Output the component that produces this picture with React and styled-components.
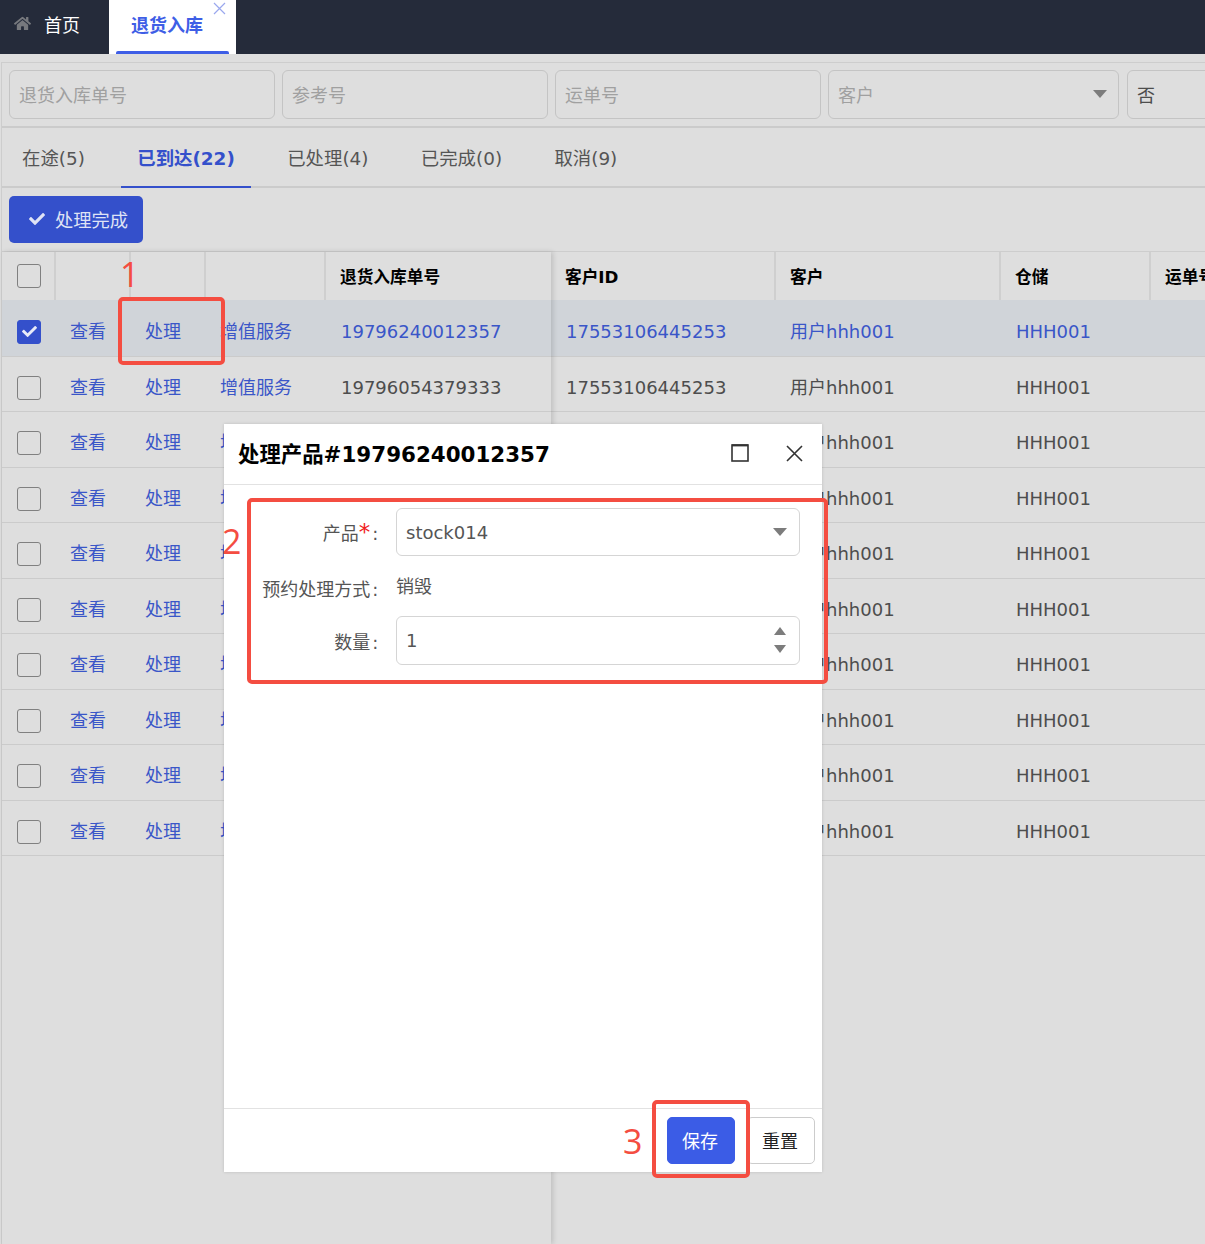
import React from "react";
import styled, { createGlobalStyle } from "styled-components";
import { FaHome, FaCheck } from "react-icons/fa";

const GlobalStyle = createGlobalStyle`
  html, body {
    margin: 0;
    padding: 0;
    background: #dedede;
    font-family: "DejaVu Sans", "Noto Sans CJK SC", sans-serif;
    font-size: 18px;
    color: #4d4d4d;
  }
  * { box-sizing: border-box; }
`;

const Page = styled.div`
  position: relative;
  width: 1205px;
  height: 1244px;
  overflow: hidden;
  background: #dedede;
`;

const TopBar = styled.div`
  height: 54px;
  background: #252b3a;
  display: flex;
`;

const HomeTab = styled.div`
  width: 109px;
  display: flex;
  align-items: center;
  gap: 13px;
  padding: 0 0 7px 14px;
  color: #fff;
  svg { color: #77797e; width: 17px; height: 17px; }
`;

const ActiveTab = styled.div`
  position: relative;
  width: 127px;
  background: #fff;
  color: #3e5ee6;
  font-weight: 700;
  padding: 13px 0 0 22px;
  line-height: 26px;
  &::after {
    content: "";
    position: absolute;
    left: 7px;
    right: 7px;
    bottom: 0;
    height: 3px;
    border-radius: 2px 2px 0 0;
    background: #3e5ee6;
  }
`;

const TabClose = styled.svg`
  position: absolute;
  top: 2px;
  right: 10px;
  width: 13px;
  height: 13px;
  stroke: #9aa8ee;
  stroke-width: 1.2;
`;

const Main = styled.div`
  margin: 8px 0 0 1px;
  border-left: 1px solid #cdcdcd;
  height: 1182px;
`;

const FilterBar = styled.div`
  height: 66px;
  border-top: 1px solid #cdcdcd;
  border-bottom: 2px solid #cbcbcb;
  padding: 7px 0 0 7px;
  display: flex;
  gap: 7px;
  overflow: hidden;
`;

const Field = styled.div`
  flex: 0 0 ${(p) => p.$w}px;
  height: 49px;
  border: 1px solid #c4c4c4;
  border-radius: 6px;
  padding: 0 9px 2px;
  display: flex;
  align-items: center;
  justify-content: space-between;
  color: ${(p) => (p.$value ? "#4d4d4d" : "#a0a0a0")};
  margin-left: ${(p) => p.$ml || 0}px;
`;

const Caret = styled.span`
  width: 0;
  height: 0;
  border-left: ${(p) => p.$s ?? 7}px solid transparent;
  border-right: ${(p) => p.$s ?? 7}px solid transparent;
  border-${(p) => (p.$up ? "bottom" : "top")}: 8px solid #7c7c7c;
  margin-right: ${(p) => p.$mr ?? 2}px;
`;

const Tabs = styled.div`
  height: 60px;
  border-bottom: 2px solid #cbcbcb;
  padding-left: 4px;
  display: flex;
  gap: 20.4px;
`;

const Tab = styled.div`
  height: 60px;
  padding: 0 16px;
  font-size: 18.4px;
  line-height: 62px;
  color: ${(p) => (p.$active ? "#3450cb" : "#555")};
  font-weight: ${(p) => (p.$active ? 700 : 400)};
  border-bottom: ${(p) => (p.$active ? "2px solid #3450cb" : "none")};
`;

const Toolbar = styled.div`
  height: 63px;
  padding: 8px 7px;
`;

const DoneButton = styled.div`
  width: 134px;
  height: 47px;
  background: #3450cb;
  border-radius: 5px;
  color: #dfe3f5;
  font-size: 18.3px;
  display: flex;
  align-items: center;
  gap: 10px;
  padding: 0 0 2px 20px;
  svg { width: 16px; height: 16px; }
`;

const TableWrap = styled.div`
  display: flex;
  height: 993px;
  border-top: 1px solid #cdcdcd;
`;

const FrozenPane = styled.div`
  flex: 0 0 549px;
  position: relative;
  z-index: 1;
  box-shadow: 2px 0 5px rgba(0, 0, 0, 0.14);
`;

const ScrollPane = styled.div`
  flex: 1;
  overflow: hidden;
`;

const Row = styled.div`
  display: grid;
  grid-template-columns: ${(p) => p.$cols};
  height: ${(p) => (p.$head ? "48px" : p.$selected ? "56.5px" : "55.5px")};
  width: ${(p) => (p.$scroll ? "800px" : "auto")};
  background: ${(p) => (p.$selected ? "#d0d4d9" : "#dedede")};
  border-bottom: ${(p) => (p.$head ? "none" : "1px solid #cbcbcb")};
`;

const HeadCell = styled.div`
  display: flex;
  align-items: center;
  padding: 2px 0 0 14px;
  color: #000;
  font-weight: 700;
  font-size: 16.7px;
  line-height: 24px;
  white-space: nowrap;
  border-right: 2px solid #cfcfcf;
  &:last-child { border-right: none; }
`;

const CheckHeadCell = styled(HeadCell)`
  padding: 0;
`;

const Cell = styled.div`
  display: flex;
  align-items: center;
  padding-left: ${(p) => p.$pl ?? 15}px;
  padding-top: 8px;
  line-height: 24px;
  white-space: nowrap;
  color: ${(p) => (p.$link ? "#3a56c8" : "#4d4d4d")};
`;

const Check = styled.span`
  width: 24px;
  height: 24px;
  margin-left: 15px;
  border-radius: 3px;
  border: 1px solid ${(p) => (p.$on ? "#3450cb" : "#808080")};
  background: ${(p) => (p.$on ? "#3450cb" : "transparent")};
  color: #e8ebf8;
  display: flex;
  align-items: center;
  justify-content: center;
  svg { width: 15px; height: 15px; }
`;

const Modal = styled.div`
  position: absolute;
  left: 224px;
  top: 424px;
  width: 598px;
  height: 748px;
  background: #fff;
  display: flex;
  flex-direction: column;
  z-index: 3;
  box-shadow: 0 0 3px rgba(0, 0, 0, 0.15);
`;

const ModalHead = styled.div`
  height: 61px;
  flex: none;
  border-bottom: 1px solid #e2e2e2;
  display: flex;
  align-items: center;
  padding: 0 19px 2px 14px;
`;

const ModalTitle = styled.div`
  flex: 1;
  color: #000;
  font-size: 21.4px;
  line-height: 26px;
  padding-top: 3px;
  font-weight: 700;
`;

const HeadIcon = styled.svg`
  width: ${(p) => p.$s}px;
  height: ${(p) => p.$s}px;
  margin-left: ${(p) => p.$ml}px;
  stroke: #333;
  fill: none;
  stroke-width: 1.6;
`;

const ModalBody = styled.div`
  flex: 1;
  padding: 23px 22px 0 0;
  display: flex;
  flex-direction: column;
`;

const FormRow = styled.div`
  display: grid;
  grid-template-columns: 172px 1fr;
  align-items: center;
  height: ${(p) => p.$h}px;
`;

const Label = styled.div`
  text-align: right;
  padding-top: ${(p) => p.$pt || 0}px;
  padding-right: 12px;
  line-height: 24px;
  color: #555;
  white-space: nowrap;
  em { color: #f02020; font-style: normal; font-size: 23px; line-height: 20px; }
`;

const Colon = styled.span`
  margin-left: 2px;
`;

const ModalInput = styled.div`
  height: ${(p) => p.$h}px;
  border: 1px solid #d5d5d5;
  border-radius: 6px;
  padding: 0 12px 0 9px;
  display: flex;
  align-items: center;
  justify-content: space-between;
  color: #555;
`;

const Stepper = styled.div`
  display: flex;
  flex-direction: column;
  gap: 10px;
  padding-bottom: 2px;
`;

const Value = styled.div`
  color: #555;
  line-height: 24px;
  padding-top: 2px;
`;

const ModalFoot = styled.div`
  height: 64px;
  flex: none;
  border-top: 1px solid #e2e2e2;
  display: flex;
  align-items: center;
  justify-content: flex-end;
  gap: 12px;
  padding: 0 7px 0 0;
`;

const FootButton = styled.div`
  width: 68px;
  height: 47px;
  border-radius: 5px;
  padding: 0 2px 2px 0;
  display: flex;
  align-items: center;
  justify-content: center;
  background: ${(p) => (p.$primary ? "#3b5ce6" : "#fff")};
  color: ${(p) => (p.$primary ? "#fff" : "#222")};
  border: 1px solid ${(p) => (p.$primary ? "#3b5ce6" : "#ccc")};
`;

const Mark = styled.div`
  position: absolute;
  left: ${(p) => p.$x}px;
  top: ${(p) => p.$y}px;
  width: ${(p) => p.$w}px;
  height: ${(p) => p.$h}px;
  border: 4px solid #f44d41;
  border-radius: 5px;
  z-index: 4;
`;

const MarkNumber = styled.div`
  position: absolute;
  left: ${(p) => p.$x}px;
  top: ${(p) => p.$y}px;
  font-family: "Open Sans", sans-serif;
  font-weight: 400;
  font-size: 34px;
  line-height: 40px;
  color: #f44d41;
  z-index: 4;
`;

const frozenCols = "54px 75px 75px 120px 225px";
const scrollCols = "225px 225px 150px 200px";

const rows = [
  { no: "19796240012357", id: "17553106445253", selected: true },
  { no: "19796054379333", id: "17553106445253" },
  ...Array.from({ length: 8 }, () => ({ no: "19796054379333", id: "17553106445253" })),
];

export default function App() {
  return (
    <Page>
      <GlobalStyle />
      <TopBar>
        <HomeTab>
          <FaHome />
          首页
        </HomeTab>
        <ActiveTab>
          退货入库
          <TabClose viewBox="0 0 13 13">
            <path d="M1 1l11 11M12 1L1 12" />
          </TabClose>
        </ActiveTab>
      </TopBar>

      <Main>
        <FilterBar>
          <Field $w={266}>退货入库单号</Field>
          <Field $w={266}>参考号</Field>
          <Field $w={266}>运单号</Field>
          <Field $w={291}>
            客户
            <Caret />
          </Field>
          <Field $w={100} $value $ml={1}>否</Field>
        </FilterBar>

        <Tabs>
          <Tab>在途(5)</Tab>
          <Tab $active>已到达(22)</Tab>
          <Tab>已处理(4)</Tab>
          <Tab>已完成(0)</Tab>
          <Tab>取消(9)</Tab>
        </Tabs>

        <Toolbar>
          <DoneButton>
            <FaCheck />
            处理完成
          </DoneButton>
        </Toolbar>

        <TableWrap>
          <FrozenPane>
            <Row $head $cols={frozenCols}>
              <CheckHeadCell>
                <Check />
              </CheckHeadCell>
              <HeadCell />
              <HeadCell />
              <HeadCell />
              <HeadCell>退货入库单号</HeadCell>
            </Row>
            {rows.map((r, i) => (
              <Row key={i} $cols={frozenCols} $selected={r.selected}>
                <Cell $pl={0}>
                  <Check $on={r.selected}>{r.selected && <FaCheck />}</Check>
                </Cell>
                <Cell $link $pl={14}>查看</Cell>
                <Cell $link $pl={14}>处理</Cell>
                <Cell $link $pl={14}>增值服务</Cell>
                <Cell $link={r.selected}>{r.no}</Cell>
              </Row>
            ))}
          </FrozenPane>

          <ScrollPane>
            <Row $head $scroll $cols={scrollCols}>
              <HeadCell>客户ID</HeadCell>
              <HeadCell>客户</HeadCell>
              <HeadCell>仓储</HeadCell>
              <HeadCell>运单号</HeadCell>
            </Row>
            {rows.map((r, i) => (
              <Row key={i} $scroll $cols={scrollCols} $selected={r.selected}>
                <Cell $link={r.selected}>{r.id}</Cell>
                <Cell $link={r.selected} $pl={14}>用户hhh001</Cell>
                <Cell $link={r.selected}>HHH001</Cell>
                <Cell />
              </Row>
            ))}
          </ScrollPane>
        </TableWrap>
      </Main>

      <Modal>
        <ModalHead>
          <ModalTitle>处理产品#19796240012357</ModalTitle>
          <HeadIcon $s={18} viewBox="0 0 18 18">
            <rect x="1" y="1" width="16" height="16" />
            <path d="M1 1.4h16" strokeWidth="2" />
          </HeadIcon>
          <HeadIcon $s={17} $ml={37} viewBox="0 0 17 17">
            <path d="M1 1l15 15M16 1L1 16" />
          </HeadIcon>
        </ModalHead>
        <ModalBody>
          <FormRow $h={48}>
            <Label $pt={4}>
              产品<em>*</em><Colon>:</Colon>&nbsp;
            </Label>
            <ModalInput $h={48}>
              stock014
              <Caret $mr={0} />
            </ModalInput>
          </FormRow>
          <FormRow $h={60}>
            <Label $pt={8}>预约处理方式<Colon>:</Colon>&nbsp;</Label>
            <Value>销毁</Value>
          </FormRow>
          <FormRow $h={49}>
            <Label $pt={4}>数量<Colon>:</Colon>&nbsp;</Label>
            <ModalInput $h={49}>
              1
              <Stepper>
                <Caret $up $s={6} $mr={1} />
                <Caret $s={6} $mr={1} />
              </Stepper>
            </ModalInput>
          </FormRow>
        </ModalBody>
        <ModalFoot>
          <FootButton $primary>保存</FootButton>
          <FootButton>重置</FootButton>
        </ModalFoot>
      </Modal>

      <Mark $x={118} $y={297} $w={107} $h={68} />
      <Mark $x={247} $y={498} $w={581} $h={186} />
      <Mark $x={652} $y={1100} $w={98} $h={78} />
      <MarkNumber $x={120} $y={254}>1</MarkNumber>
      <MarkNumber $x={222} $y={521}>2</MarkNumber>
      <MarkNumber $x={623} $y={1121}>3</MarkNumber>
    </Page>
  );
}
